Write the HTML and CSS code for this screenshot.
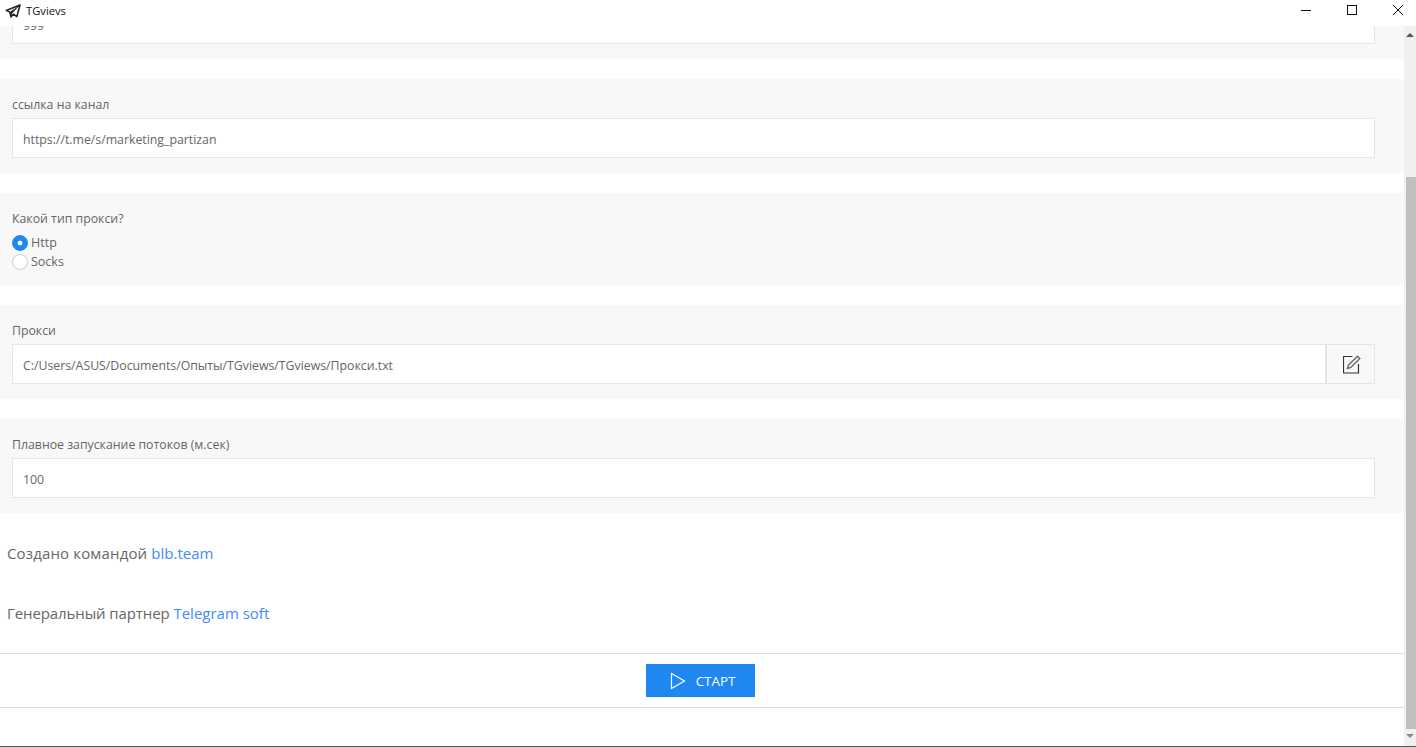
FILE: index.html
```html
<!DOCTYPE html>
<html lang="ru">
<head>
<meta charset="utf-8">
<title>TGvievs</title>
<link rel="stylesheet" href="styles.css">
</head>
<body>
<div class="window">
  <header class="titlebar">
    <div class="brand">
      <svg class="plane" width="16" height="14" viewBox="0 0 16 14"><path d="M15 1 1.200 6.400l3.600 1.700 1.200 4.800 2.400-2.700 3.400 2.400z" fill="#fff" stroke="#222" stroke-width="1.600" stroke-linejoin="round"/><path d="M4.800 8.100 15 1 7 9.400l-1 3.500z" fill="#222"/></svg>
      <span>TGvievs</span>
    </div>
    <div class="controls">
      <svg width="12" height="12" viewBox="0 0 12 12"><path d="M1 6.500h10" stroke="#111" fill="none"/></svg>
      <svg width="12" height="12" viewBox="0 0 12 12"><rect x="1.500" y="1.500" width="9" height="9" stroke="#111" fill="none"/></svg>
      <svg width="12" height="12" viewBox="0 0 12 12"><path d="M1 1l10 10M11 1 1 11" stroke="#111" fill="none"/></svg>
    </div>
  </header>
  <div class="body">
    <main class="content">
      <section class="card card-clipped">
        <div class="input input-clipped">999</div>
      </section>
      <section class="card">
        <label class="label">ссылка на канал</label>
        <div class="input">https://t.me/s/marketing_partizan</div>
      </section>
      <section class="card card-radio">
        <label class="label">Какой тип прокси?</label>
        <div class="radio"><span class="dot dot-on"></span>Http</div>
        <div class="radio"><span class="dot"></span>Socks</div>
      </section>
      <section class="card">
        <label class="label">Прокси</label>
        <div class="group">
          <div class="input input-grow">C:/Users/ASUS/Documents/Опыты/TGviews/TGviews/Прокси.txt</div>
          <div class="addon">
            <svg width="18" height="19" viewBox="0 0 18 19"><path d="M15.500 9v9H.500V1.500h9" fill="none" stroke="#333" stroke-width="1.200"/><path d="M4.500 13.500l1-3.500L14.500 1.200l2.300 2.300-9 8.900z" fill="none" stroke="#666" stroke-width="1.400"/></svg>
          </div>
        </div>
      </section>
      <section class="card">
        <label class="label">Плавное запускание потоков (м.сек)</label>
        <div class="input">100</div>
      </section>
      <div class="credits">
        <p class="credit credit-wide">Создано командой <a href="#">blb.team</a></p>
        <p class="credit credit-tight">Генеральный партнер <a href="#">Telegram soft</a></p>
      </div>
      <div class="actions">
        <button class="start">
          <svg width="16" height="18" viewBox="0 0 16 18"><path d="M1.500 1.500v15L14.500 9z" fill="none" stroke="#fff" stroke-width="1.200"/></svg>
          <span>СТАРТ</span>
        </button>
      </div>
    </main>
    <aside class="scrollbar">
      <span class="arrow arrow-up"></span>
      <div class="track"><div class="thumb"></div></div>
      <span class="arrow arrow-down"></span>
    </aside>
  </div>
</div>
</body>
</html>
```

FILE: styles.css
```css
* { box-sizing: border-box; }
html, body { margin: 0; height: 100%; overflow: hidden; }
body { background: #fff; font-family: "Open Sans", "Noto Sans", sans-serif; font-size: 12.3px; color: #666; }
.window { height: 747px; display: flex; flex-direction: column; }
.titlebar { height: 26px; flex: none; display: flex; justify-content: space-between; align-items: center; background: #fff; }
.brand { display: flex; align-items: center; gap: 5px; padding-left: 5px; color: #111; font-size: 11.2px; margin-top: -5px; }
.controls { display: flex; gap: 34px; padding-right: 12px; margin-top: -6px; }
.body { flex: 1; display: flex; min-height: 0; }
.content { flex: 1; min-width: 0; display: flex; flex-direction: column; gap: 20px; overflow: hidden; }
.card { background: #f8f8f8; padding: 0 29px 15px 12px; height: 94px; flex: none; }
.card-clipped { height: 33px; overflow: hidden; }
.card-radio { height: 92px; }
.label { display: block; height: 39px; padding-top: 17px; line-height: 18px; }
.input { height: 40px; background: #fff; border: 1px solid #e5e5e5; padding: 2px 0 0 10px; line-height: 38px; }
.input-clipped { margin-top: -22px; }
.input-grow { flex: 1; }
.group { display: flex; }
.addon { width: 49px; height: 40px; border: 1px solid #e5e5e5; padding-left: 2px; display: flex; align-items: center; justify-content: center; }
.card-radio .label { height: 40px; padding-top: 17px; }
.radio { display: flex; align-items: center; gap: 3px; height: 19px; font-size: 12.5px; }
.dot { width: 16px; height: 16px; border-radius: 50%; border: 1px solid #ccc; background: #fff; }
.dot-on { border-color: #1e88f0; background: radial-gradient(circle, #fff 2px, #1e88f0 2.800px); }
.credits { display: flex; flex-direction: column; margin-top: -20px; }
.credit { margin: 0; height: 60px; padding-left: 7px; line-height: 80px; font-size: 15px; }
.credit-wide { letter-spacing: .15px; }
.credit-tight { letter-spacing: -.1px; }
.credit a { color: #3f8cf5; text-decoration: none; letter-spacing: 0; }
.actions { height: 55px; padding-right: 3px; border-top: 1px solid #ddd; border-bottom: 1px solid #ddd; display: flex; justify-content: center; align-items: center; }
.start { width: 109px; height: 33px; border: 0; background: #1e88f0; color: #fff; font: inherit; font-size: 13.4px; display: flex; align-items: center; justify-content: center; gap: 10px; padding: 0 0 0 4px; }
.scrollbar { width: 12px; flex: none; background: #f0f0f0; display: flex; flex-direction: column; align-items: center; }
.arrow { width: 0; height: 0; border-left: 4px solid transparent; border-right: 4px solid transparent; flex: none; }
.arrow-up { border-bottom: 4px solid #555; margin-top: 7px; }
.arrow-down { border-top: 4px solid #888; margin-bottom: 8px; }
.track { flex: 1; width: 100%; padding: 140px 0 5px 2px; display: flex; }
.thumb { flex: 1; background: #c0c0c0; }
.window::after { content: ""; height: 1px; background: #555; flex: none; }
```
